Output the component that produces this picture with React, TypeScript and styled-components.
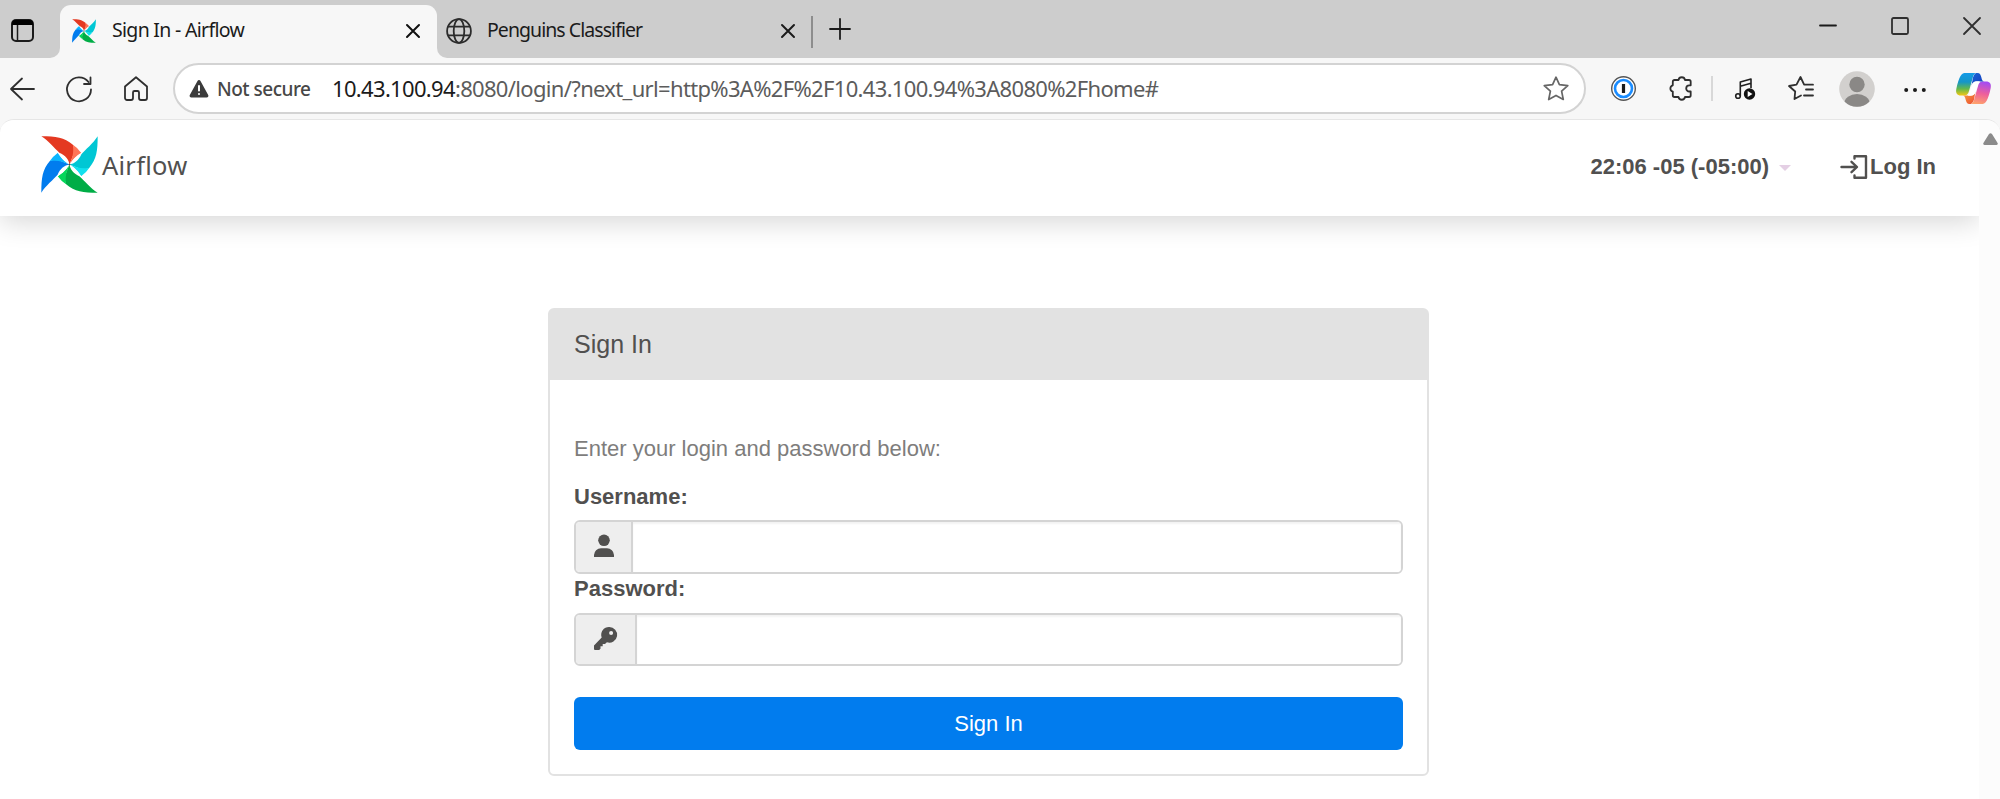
import React from "react";
import styled, { createGlobalStyle } from "styled-components";

const GlobalStyle = createGlobalStyle`
  *, *::before, *::after { box-sizing: border-box; }
  body {
    margin: 0;
    background: #fff;
    overflow: hidden;
    font-family: "Liberation Sans", Arial, sans-serif;
    color: #51504f;
  }
  svg { display: block; flex: none; overflow: visible; }
`;

const uiFont = `"Segoe UI", "Noto Sans", sans-serif`;

const Window = styled.div`
  display: flex;
  flex-direction: column;
  width: 2000px;
  height: 799px;
  overflow: hidden;
  background: #f7f7f7;
`;

/* ---------- tab strip ---------- */

const TabStrip = styled.div`
  display: flex;
  height: 58px;
  background: #f7f7f7;
  font-family: ${uiFont};
  font-size: 19.5px;
  color: #1b1b1b;
`;

const StripStart = styled.div`
  display: flex;
  align-items: center;
  width: 60px;
  padding: 3px 0 0 11px;
  background: #cdcdcd;
  border-bottom-right-radius: 10px;
`;

const ActiveTabSlot = styled.div`
  width: 377px;
  padding-top: 5px;
  background: #cdcdcd;
`;

const ActiveTab = styled.div`
  display: flex;
  align-items: center;
  height: 53px;
  padding: 0 17px 2px 12px;
  background: #f7f7f7;
  border-radius: 11px 11px 0 0;
`;

const StripRest = styled.div`
  display: flex;
  flex: 1;
  background: #cdcdcd;
  border-bottom-left-radius: 10px;
`;

const IdleTab = styled.div`
  display: flex;
  align-items: center;
  width: 374px;
  padding: 3px 16px 0 9px;
`;

const TabTitle = styled.span<{ $gap: number; $spacing: number }>`
  flex: 1;
  margin-left: ${(p) => p.$gap}px;
  letter-spacing: ${(p) => p.$spacing}px;
  line-height: 26px;
  padding-bottom: 2px;
  white-space: nowrap;
`;

const TabDivider = styled.div`
  width: 2px;
  height: 32px;
  margin: 16px 16px 0 0;
  background: #8d8d8d;
`;

const NewTab = styled.div`
  padding-top: 18px;
`;

const WindowButtons = styled.div`
  display: flex;
  gap: 54px;
  margin-left: auto;
  padding: 17px 19px 0 0;
`;

/* ---------- toolbar ---------- */

const Toolbar = styled.div`
  display: flex;
  align-items: center;
  height: 61px;
  padding: 0 8px 0 9px;
`;

const NavButtons = styled.div`
  display: flex;
  align-items: center;
  width: 164px;
  gap: 31px;
`;

const AddressBar = styled.div`
  display: flex;
  align-items: center;
  width: 1413px;
  height: 51px;
  padding: 0 15px 0 14px;
  border: 2px solid #d3d3d3;
  border-radius: 26px;
  background: #fff;
  font-family: ${uiFont};
`;

const Security = styled.span`
  width: 116px;
  margin-left: 8px;
  padding-top: 1px;
  font-size: 19px;
  font-weight: 500;
  letter-spacing: -0.5px;
  line-height: 26px;
  color: #474747;
  white-space: nowrap;
`;

const Address = styled.span`
  flex: 1;
  margin-left: -1px;
  padding-bottom: 1px;
  font-size: 22px;
  letter-spacing: -0.67px;
  line-height: 30px;
  color: #5c5c5c;
  white-space: nowrap;
  b { font-weight: 400; color: #1b1b1b; }
`;

const Actions = styled.div`
  display: flex;
  align-items: center;
  padding-left: 25px;
`;

const Action = styled.div<{ $gap: number }>`
  margin-left: ${(p) => p.$gap}px;
`;

const ActionDivider = styled.div`
  width: 2px;
  height: 25px;
  margin-left: 18px;
  background: #d8d8d8;
`;

/* ---------- page ---------- */

const Viewport = styled.div`
  display: flex;
  flex: 1;
  border-top: 1px solid #e6e6e6;
  border-radius: 14px 14px 0 0;
  background: #fff;
  overflow: hidden;
`;

const Page = styled.div`
  width: 1979px;
  overflow: hidden;
`;

const Scrollbar = styled.div`
  width: 21px;
  padding: 13px 0 0 4px;
  background: #fcfcfc;
`;

const Navbar = styled.header`
  display: flex;
  align-items: center;
  height: 96px;
  padding: 0 43px 7px 41px;
  background: #fff;
  box-shadow: 0 6px 26px rgba(0, 0, 0, 0.16);
`;

const Brand = styled.span`
  margin-left: 4px;
  font-family: "Noto Sans", sans-serif;
  font-size: 25.5px;
  line-height: 34px;
  letter-spacing: 0.25px;
`;

const NavItem = styled.div<{ $right: number }>`
  display: flex;
  align-items: center;
  margin-right: ${(p) => p.$right}px;
  padding-top: 4px;
  font-size: 22px;
  font-weight: 700;
  line-height: 26px;
  white-space: nowrap;
`;

const NavEnd = styled.div`
  display: flex;
  margin-left: auto;
`;

const Caret = styled.span`
  margin: 2px 0 0 10px;
  border: 6px solid transparent;
  border-top-color: #e4cfe4;
  border-bottom: 0;
`;

const Panel = styled.section`
  width: 881px;
  height: 468px;
  margin: 92px 0 0 548px;
  border: 2px solid #e2e2e2;
  border-radius: 6px;
  background: #fff;
`;

const PanelHeader = styled.h1`
  height: 70px;
  margin: 0;
  padding: 18px 24px;
  background: #e2e2e2;
  font-size: 25px;
  font-weight: 400;
  line-height: 32px;
`;

const PanelBody = styled.form`
  display: flex;
  flex-direction: column;
  padding: 54px 24px 0;
  font-size: 22px;
`;

const Hint = styled.p`
  margin: 0 0 18px;
  line-height: 30px;
  color: #7e7d7c;
`;

const Label = styled.label<{ $after: number }>`
  margin-bottom: ${(p) => p.$after}px;
  font-weight: 700;
  line-height: 30px;
`;

const Field = styled.div<{ $height: number; $after: number }>`
  display: flex;
  height: ${(p) => p.$height}px;
  margin-bottom: ${(p) => p.$after}px;
  border: 2px solid #d4d4d4;
  border-radius: 6px;
  overflow: hidden;
`;

const Addon = styled.span<{ $width: number }>`
  display: flex;
  justify-content: center;
  width: ${(p) => p.$width}px;
  padding-top: 12px;
  border-right: 2px solid #d4d4d4;
  background: #eee;
`;

const Input = styled.input`
  flex: 1;
  border: 0;
  outline: 0;
  background: #fff;
  box-shadow: inset 0 2px 2px rgba(0, 0, 0, 0.05);
`;

const Submit = styled.button`
  height: 53px;
  padding: 0;
  border: 0;
  border-radius: 6px;
  background: #017cee;
  color: #fff;
  font: 22px/30px "Liberation Sans", Arial, sans-serif;
`;

/* ---------- drawings ---------- */

const blades = [
  ["#e43921", "#ff7557"],
  ["#00c7d4", "#11e1ee"],
  ["#00ad46", "#04d659"],
  ["#017cee", "#0cb6ff"],
];

const Pinwheel = ({ size }: { size: number }) => (
  <svg width={size} height={size} viewBox="-84 -84 168 168">
    {blades.map(([dark, light], i) => (
      <g key={dark} transform={`rotate(${i * 90})`}>
        <path fill={dark} d="M-83-83C-40-83-16-80 10-58L16-40 0 0C-2-15-12-27-30-35-44-47-62-70-83-83Z" />
        <path fill={light} d="M10-58Q24-49 34-35C22-28 5-12 0 0 9-18 13-36 10-58Z" />
      </g>
    ))}
    {blades.map(([, light], i) => (
      <path key={light} fill={light} transform={`rotate(${i * 90})`} d="M34-35C20-27 5-14 0 0L8-20 20-40Z" />
    ))}
    <circle r="3" fill="#51504f" />
  </svg>
);

const Line = ({ w, h, d, stroke = "#2f2f2f", sw = 1.8, fill = "none" }: {
  w: number; h: number; d: string; stroke?: string; sw?: number; fill?: string;
}) => (
  <svg width={w} height={h} viewBox={`0 0 ${w} ${h}`} fill={fill} stroke={stroke} strokeWidth={sw} strokeLinecap="round" strokeLinejoin="round">
    <path d={d} />
  </svg>
);

const WorkspacesIcon = () => (
  <svg width="23" height="23" viewBox="0 0 23 23" fill="none" stroke="#1b1b1b" strokeWidth="2">
    <rect x="1" y="1" width="21" height="21" rx="4" />
    <path fill="#000" stroke="none" d="M1 6V4a3 3 0 0 1 3-3h15a3 3 0 0 1 3 3v2Z" />
    <path strokeWidth="1.5" d="M6.5 6v16" />
  </svg>
);

const GlobeIcon = () => (
  <svg width="26" height="26" viewBox="0 0 26 26" fill="none" stroke="#2b2b2b" strokeWidth="1.8">
    <circle cx="13" cy="13" r="11.9" />
    <ellipse cx="13" cy="13" rx="5.3" ry="11.9" />
    <path d="M2 8.7h22M2 17.3h22" />
  </svg>
);

const WarningIcon = () => (
  <svg width="20" height="18" viewBox="0 0 20 18">
    <path fill="#3b3b3b" d="M8.5 1a1.7 1.7 0 0 1 3 0l7.700 14a1.700 1.700 0 0 1-1.500 2.500H2.300A1.700 1.700 0 0 1 .8 15Z" />
    <path stroke="#fff" strokeWidth="2" strokeLinecap="round" d="M10 6v4.500M10 14v.1" />
  </svg>
);

const OnePasswordIcon = () => (
  <svg width="25" height="25" viewBox="0 0 25 25" fill="none">
    <circle cx="12.500" cy="12.500" r="11.800" fill="#fff" stroke="#555" strokeWidth="1.400" />
    <circle cx="12.500" cy="12.500" r="8.500" stroke="#1a8cff" strokeWidth="2.600" />
    <path stroke="#1b1b1b" strokeWidth="3.200" d="M12.500 8v9" />
  </svg>
);

const MediaIcon = () => (
  <svg width="21" height="22" viewBox="0 0 21 22" fill="none" stroke="#1f1f1f" strokeWidth="1.600" strokeLinejoin="round">
    <circle cx="3" cy="18" r="2.300" />
    <path d="M5.300 18V4L16 1v9M5.300 8.200 16 5.200" />
    <circle cx="14.500" cy="16" r="5.700" fill="#111" stroke="none" />
    <path fill="#fff" stroke="none" d="M12.700 13.100v5.800l4.800-2.900Z" />
  </svg>
);

const ProfileIcon = () => (
  <svg width="36" height="36" viewBox="0 0 36 36">
    <clipPath id="profile"><circle cx="18" cy="18" r="17.800" /></clipPath>
    <g clipPath="url(#profile)">
      <path fill="#d2d0ce" d="M0 0h36v36H0Z" />
      <circle cx="18" cy="13.500" r="7.700" fill="#8a8886" />
      <ellipse cx="18" cy="32.500" rx="12.700" ry="9.500" fill="#8a8886" />
    </g>
  </svg>
);

const CopilotIcon = () => (
  <svg width="35" height="33" viewBox="0 0 35 33">
    <defs>
      <linearGradient id="cpA" x1="0" y1="0" x2="0" y2="1">
        <stop offset="0" stopColor="#159be8" /><stop offset=".4" stopColor="#1596c8" />
        <stop offset=".7" stopColor="#62b84d" /><stop offset="1" stopColor="#f4c811" />
      </linearGradient>
      <linearGradient id="cpB" x1="0" y1="0" x2="1" y2="1">
        <stop offset="0" stopColor="#1766d8" /><stop offset="1" stopColor="#1738b8" />
      </linearGradient>
      <linearGradient id="cpC" x1=".5" y1="0" x2=".3" y2="1">
        <stop offset="0" stopColor="#a54cf0" /><stop offset=".5" stopColor="#ee5f9b" /><stop offset="1" stopColor="#ffa46b" />
      </linearGradient>
      <linearGradient id="cpD" x1="0" y1="0" x2="1" y2="1">
        <stop offset="0" stopColor="#f7a53b" /><stop offset="1" stopColor="#ec4b35" />
      </linearGradient>
    </defs>
    <path fill="url(#cpA)" d="M10 1h11c-2.500 0-3.500 2-4.200 4.500L13 19c-.8 2.800-2 4.500-4.500 4.500H5c-4 0-5.500-2.500-4.700-6.500C1.500 11 3 6.500 4.500 4 6 1.500 7.500 1 10 1Z" />
    <path fill="url(#cpC)" d="M25 32H14c2.500 0 3.500-2 4.200-4.500L22 14c.8-2.800 2-4.500 4.500-4.500H30c4 0 5.500 2.500 4.700 6.500-1.200 6-2.700 10.500-4.200 13-1.500 2.500-3 3-5.500 3Z" />
    <path fill="url(#cpB)" d="M17 1h4.500c2.500 0 3.200 2 3.900 4.500.5 2.400 1.200 4 3.100 4h-8c-2.500 0-4 1-5 4L17 5.500Q17.800 2 20 1Z" />
    <path fill="url(#cpD)" d="M18 32h-4.500c-2.500 0-3.200-2-3.900-4.500-.5-2.400-1.200-4-3.100-4h8c2.500 0 4-1 5-4L18 27.500Q17.200 31 15 32Z" />
    <path fill="#fff" d="M16 13c.8-2.500 2.200-3.700 4.500-3.700H24c-1 .9-1.600 2.300-2.200 4.200l-2.300 6.500c-.8 2.500-2.200 3.700-4.500 3.700h-3.300c1-.9 1.600-2.300 2.100-4.200Z" />
  </svg>
);

const UserIcon = () => (
  <svg width="20" height="23" viewBox="0 0 20 23" fill="#51504f">
    <circle cx="10" cy="6.300" r="5.800" />
    <path d="M0 23v-2a7 7 0 0 1 7-6.800h6a7 7 0 0 1 7 6.800v2Z" />
  </svg>
);

const KeyIcon = () => (
  <svg width="23" height="23" viewBox="0 0 23 23">
    <path fill="#51504f" fillRule="evenodd" d="M15.200 0a7.800 7.800 0 1 1-2.300 15.200L11 17H8.700v2.200H6.500v2.500L5.200 23H1a1 1 0 0 1-1-1v-3.500l7.700-7.900A7.800 7.800 0 0 1 15.200 0Zm1.900 4a2 2 0 1 0 0 4 2 2 0 0 0 0-4Z" />
  </svg>
);

export default function App() {
  return (
    <Window>
      <GlobalStyle />
      <TabStrip>
        <StripStart><WorkspacesIcon /></StripStart>
        <ActiveTabSlot>
          <ActiveTab>
            <Pinwheel size={24} />
            <TabTitle $gap={16} $spacing={-0.7}>Sign In - Airflow</TabTitle>
            <Line w={14} h={14} d="M1 1 13 13M13 1 1 13" stroke="#111" sw={2} />
          </ActiveTab>
        </ActiveTabSlot>
        <StripRest>
          <IdleTab>
            <GlobeIcon />
            <TabTitle $gap={15} $spacing={-0.95}>Penguins Classifier</TabTitle>
            <Line w={14} h={14} d="M1 1 13 13M13 1 1 13" stroke="#1b1b1b" sw={2} />
          </IdleTab>
          <TabDivider />
          <NewTab><Line w={22} h={22} d="M11 1v20M1 11h20" stroke="#1b1b1b" /></NewTab>
          <WindowButtons>
            <Line w={18} h={18} d="M1 8.500h16" stroke="#1b1b1b" />
            <Line w={18} h={18} d="M2.500 1h13A1.500 1.500 0 0 1 17 2.500v13a1.500 1.500 0 0 1-1.500 1.500h-13A1.500 1.500 0 0 1 1 15.500v-13A1.500 1.500 0 0 1 2.500 1Z" />
            <Line w={18} h={18} d="M1 1l16 16M17 1 1 17" />
          </WindowButtons>
        </StripRest>
      </TabStrip>

      <Toolbar>
        <NavButtons>
          <Line w={26} h={24} d="M25 12H2M13 1.500 2 12l11 10.500" />
          <Line w={27} h={26} d="M25 13.500A12 12 0 1 1 22.500 6M24.500 1.500v6.500H18" />
          <Line w={24} h={25} d="M1 10.500 12 1.200 23 10.500V22a2 2 0 0 1-2 2h-4a2 2 0 0 1-2-2v-5.500a1.500 1.500 0 0 0-1.500-1.500h-3A1.500 1.500 0 0 0 9 16.500V22a2 2 0 0 1-2 2H3a2 2 0 0 1-2-2Z" />
        </NavButtons>
        <AddressBar>
          <WarningIcon />
          <Security>Not secure</Security>
          <Address><b>10.43.100.94</b>:8080/login/?next_url=http%3A%2F%2F10.43.100.94%3A8080%2Fhome#</Address>
          <Line w={26} h={25} stroke="#666" sw={1.700} d="M13 1.200 16.400 8.700 24.800 9.700 18.600 15.200 20.300 23.500 13 19.400 5.700 23.500 7.400 15.200 1.200 9.700 9.600 8.700Z" />
        </AddressBar>
        <Actions>
          <OnePasswordIcon />
          <Action $gap={33}>
            <Line w={24} h={25} d="M5.500 4H9.500A3.300 3.300 0 0 1 16 4H20a1.700 1.700 0 0 1 1.700 1.700V9.300H20.300a3 3 0 0 0 0 6.200H21.700V19.300A1.700 1.700 0 0 1 20 21H16a3.300 3.300 0 0 1-6.500 0H5.500a1.700 1.700 0 0 1-1.700-1.700V15.500a3.200 3.200 0 0 1 0-6.200V5.700A1.700 1.700 0 0 1 5.500 4Z" />
          </Action>
          <ActionDivider />
          <Action $gap={22}><MediaIcon /></Action>
          <Action $gap={32}>
            <Line w={26} h={25} d="M13 19.500 6.500 23 7.200 15.500 1 10l7.500-1.300L12.500 1 16 8.300M16.500 8.700h8.500M18 13.500h7M16 19.500h9" />
          </Action>
          <Action $gap={25}><ProfileIcon /></Action>
          <Action $gap={29}>
            <svg width="22" height="6" viewBox="0 0 22 6" fill="#1b1b1b">
              <circle cx="2.200" cy="4" r="2" /><circle cx="11" cy="4" r="2" /><circle cx="19.800" cy="4" r="2" />
            </svg>
          </Action>
          <Action $gap={30}><CopilotIcon /></Action>
        </Actions>
      </Toolbar>

      <Viewport>
        <Page>
          <Navbar>
            <Pinwheel size={57} />
            <Brand>Airflow</Brand>
            <NavEnd>
              <NavItem $right={49}>22:06 -05 (-05:00)<Caret /></NavItem>
              <NavItem $right={0}>
                <Line w={30} h={24} stroke="#51504f" sw={2.400} d="M1.500 12h15M11.500 6.800 17 12l-5.500 5.200M14.500 3.500V1.200H26V22.800H14.500V20.500" />
                Log In
              </NavItem>
            </NavEnd>
          </Navbar>
          <Panel>
            <PanelHeader>Sign In</PanelHeader>
            <PanelBody>
              <Hint>Enter your login and password below:</Hint>
              <Label $after={8} htmlFor="username">Username:</Label>
              <Field $height={54} $after={0}>
                <Addon $width={57}><UserIcon /></Addon>
                <Input id="username" />
              </Field>
              <Label $after={9} htmlFor="password">Password:</Label>
              <Field $height={53} $after={31}>
                <Addon $width={61}><KeyIcon /></Addon>
                <Input id="password" type="password" />
              </Field>
              <Submit type="button">Sign In</Submit>
            </PanelBody>
          </Panel>
        </Page>
        <Scrollbar>
          <svg width="15" height="12" viewBox="0 0 15 12"><path fill="#8b8b8b" d="M6 1a2 2 0 0 1 3 0l5.600 9a1.300 1.300 0 0 1-1.100 2h-12a1.300 1.300 0 0 1-1.100-2Z" /></svg>
        </Scrollbar>
      </Viewport>
    </Window>
  );
}
